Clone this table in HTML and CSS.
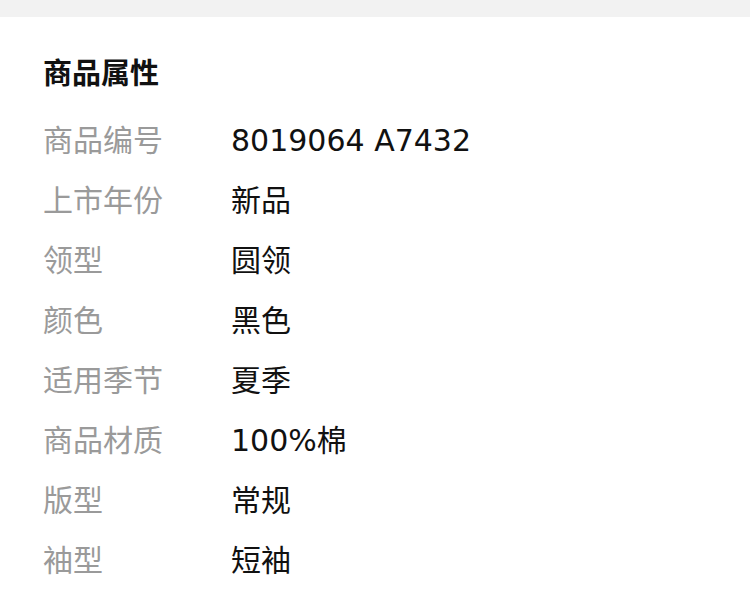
FILE: index.html
```html
<!DOCTYPE html>
<html lang="zh-CN">

<head>
  <meta charset="UTF-8" />
  <title>商品属性</title>
  <meta name="viewport" content="width=device-width, initial-scale=1.0" />
  <link rel="stylesheet" href="styles.css">
</head>

<body>
  <div class="top-gap"></div>

  <div class="attr-card">
    <h3>商品属性</h3>
    <div class="attr-list">
      <div class="attr-row"><span class="attr-label">商品编号</span><span class="attr-value">8019064 A7432</span></div>
      <div class="attr-row"><span class="attr-label">上市年份</span><span class="attr-value">新品</span></div>
      <div class="attr-row"><span class="attr-label">领型</span><span class="attr-value">圆领</span></div>
      <div class="attr-row"><span class="attr-label">颜色</span><span class="attr-value">黑色</span></div>
      <div class="attr-row"><span class="attr-label">适用季节</span><span class="attr-value">夏季</span></div>
      <div class="attr-row"><span class="attr-label">商品材质</span><span class="attr-value">100%棉</span></div>
      <div class="attr-row"><span class="attr-label">版型</span><span class="attr-value">常规</span></div>
      <div class="attr-row"><span class="attr-label">袖型</span><span class="attr-value">短袖</span></div>
    </div>
  </div>
</body>

</html>
```

FILE: styles.css
```css
body {
  margin: 0;
  background: #fff;
  font-family: 'Noto Sans CJK SC', 'Noto Sans', sans-serif;
}

.top-gap {
  height: 17px;
  background: #f2f2f2;
}

.attr-card {
  background: #fff;
  padding: 34px 43px 0;
}

.attr-card h3 {
  margin: 0 0 20px;
  font-size: 29px;
  line-height: 40px;
  font-weight: bold;
  color: #111;
}

/* DejaVu for the latin digits, CJK falls through to Noto */
.attr-row {
  display: grid;
  grid-template-columns: 188px 1fr;
  height: 60px;
  align-items: center;
  font-family: 'DejaVu Sans', 'Noto Sans CJK SC', sans-serif;
  font-size: 30px;
  line-height: 60px;
}

.attr-label {
  color: #9a9a9a;
}

.attr-value {
  color: #111;
}
```
